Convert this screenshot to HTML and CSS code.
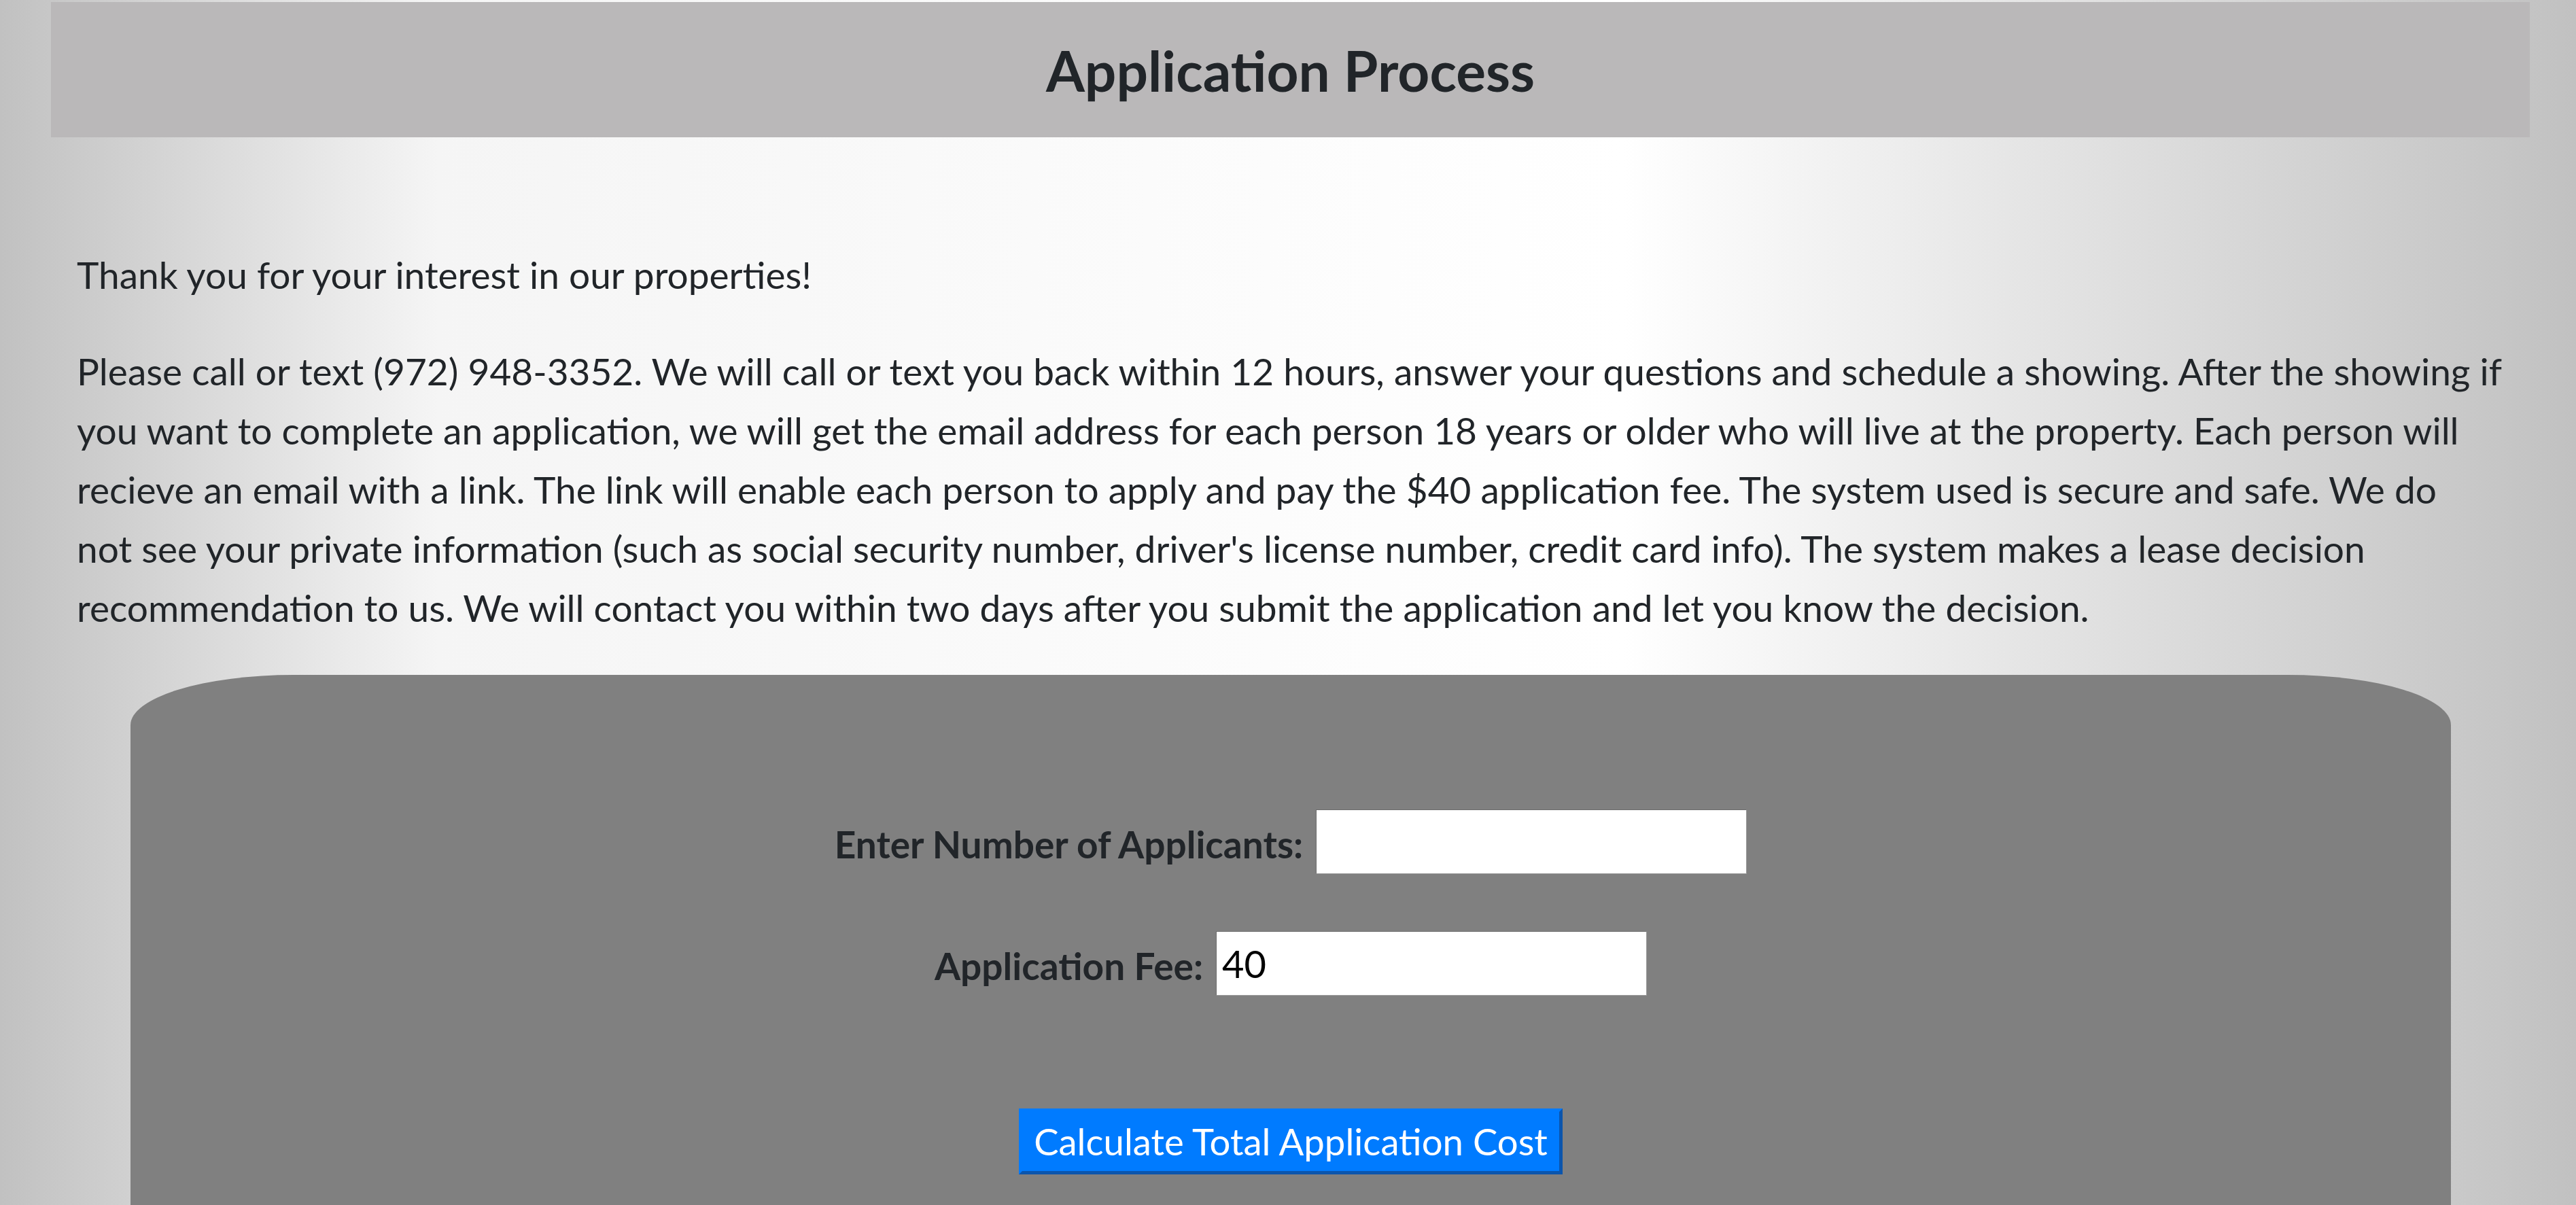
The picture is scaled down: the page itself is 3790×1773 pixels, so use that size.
FILE: index.html
```html
<!DOCTYPE html>
<html lang="en">
<head>
<meta charset="utf-8">
<title>Application Process</title>
<link rel="stylesheet" href="styles.css">
</head>
<body>
<div class="page">
  <header class="banner">
    <h1 class="banner-title">Application Process</h1>
  </header>
  <main class="content">
    <p class="intro">Thank you for your interest in our properties!</p>
    <p class="intro">Please call or text (972) 948-3352. We will call or text you back within 12 hours, answer your questions and schedule a showing. After the showing if you want to complete an application, we will get the email address for each person 18 years or older who will live at the property. Each person will recieve an email with a link. The link will enable each person to apply and pay the $40 application fee. The system used is secure and safe. We do not see your private information (such as social security number, driver's license number, credit card info). The system makes a lease decision recommendation to us. We will contact you within two days after you submit the application and let you know the decision.</p>
    <section class="calc">
      <div class="calc-row">
        <label class="calc-label" for="applicants">Enter Number of Applicants:</label>
        <input class="calc-input" id="applicants" type="text">
      </div>
      <div class="calc-row calc-row-second">
        <label class="calc-label" for="fee">Application Fee:</label>
        <input class="calc-input" id="fee" type="text" value="40">
      </div>
      <div class="calc-actions">
        <button class="calc-button" type="button">Calculate Total Application Cost</button>
      </div>
    </section>
  </main>
</div>
</body>
</html>
```
FILE: styles.css
```css
html, body {
  margin: 0;
  padding: 0;
}
body {
  min-height: 100vh;
  background: linear-gradient(to right, #c1c1c1 0%, #f5f5f5 17%, #ffffff 63%, #c1c1c1 100%);
  font-family: "Lato", "Liberation Sans", sans-serif;
  color: #212529;
  overflow: hidden;
}
.page {
  padding: 3px 68px 0 75px;
}
.banner {
  background: #bab8b9;
  height: 199px;
  box-sizing: border-box;
  padding-top: 59px;
  text-align: center;
}
.banner-title {
  margin: 0;
  font-size: 82px;
  line-height: 82px;
  font-weight: 700;
  color: #212529;
}
.content {
  padding: 159px 42px 0 38px;
}
.intro {
  margin: 0 0 55px;
  font-size: 55px;
  line-height: 87px;
}
.calc {
  margin: 0 74px 0 79px;
  background: #808080;
  border-radius: 240px 240px 0 0 / 74px 74px 0 0;
  padding: 198px 0 300px;
}
.calc-row {
  display: flex;
  justify-content: center;
  align-items: center;
  gap: 19px;
}
.calc-row-second {
  margin-top: 84px;
}
.calc-label {
  font-size: 55px;
  font-weight: 700;
  color: #212529;
  position: relative;
  top: 3px;
}
.calc-input {
  width: 634px;
  height: 95px;
  box-sizing: border-box;
  border: 1px solid;
  border-color: #6c6c6c #9a9a9a #9a9a9a #6c6c6c;
  background: #fff;
  font-family: "Lato", "Liberation Sans", sans-serif;
  font-size: 56px;
  color: #000;
  padding: 0 8px;
  outline: none;
}
.calc-actions {
  margin-top: 166px;
  text-align: center;
}
.calc-button {
  height: 97px;
  box-sizing: border-box;
  padding: 0 17px;
  border: 5px solid;
  border-color: #007bff #0b55ad #0b55ad #007bff;
  background: #007bff;
  color: #fff;
  font-family: "Lato", "Liberation Sans", sans-serif;
  font-size: 54.5px;
  line-height: 87px;
  cursor: pointer;
}
```
